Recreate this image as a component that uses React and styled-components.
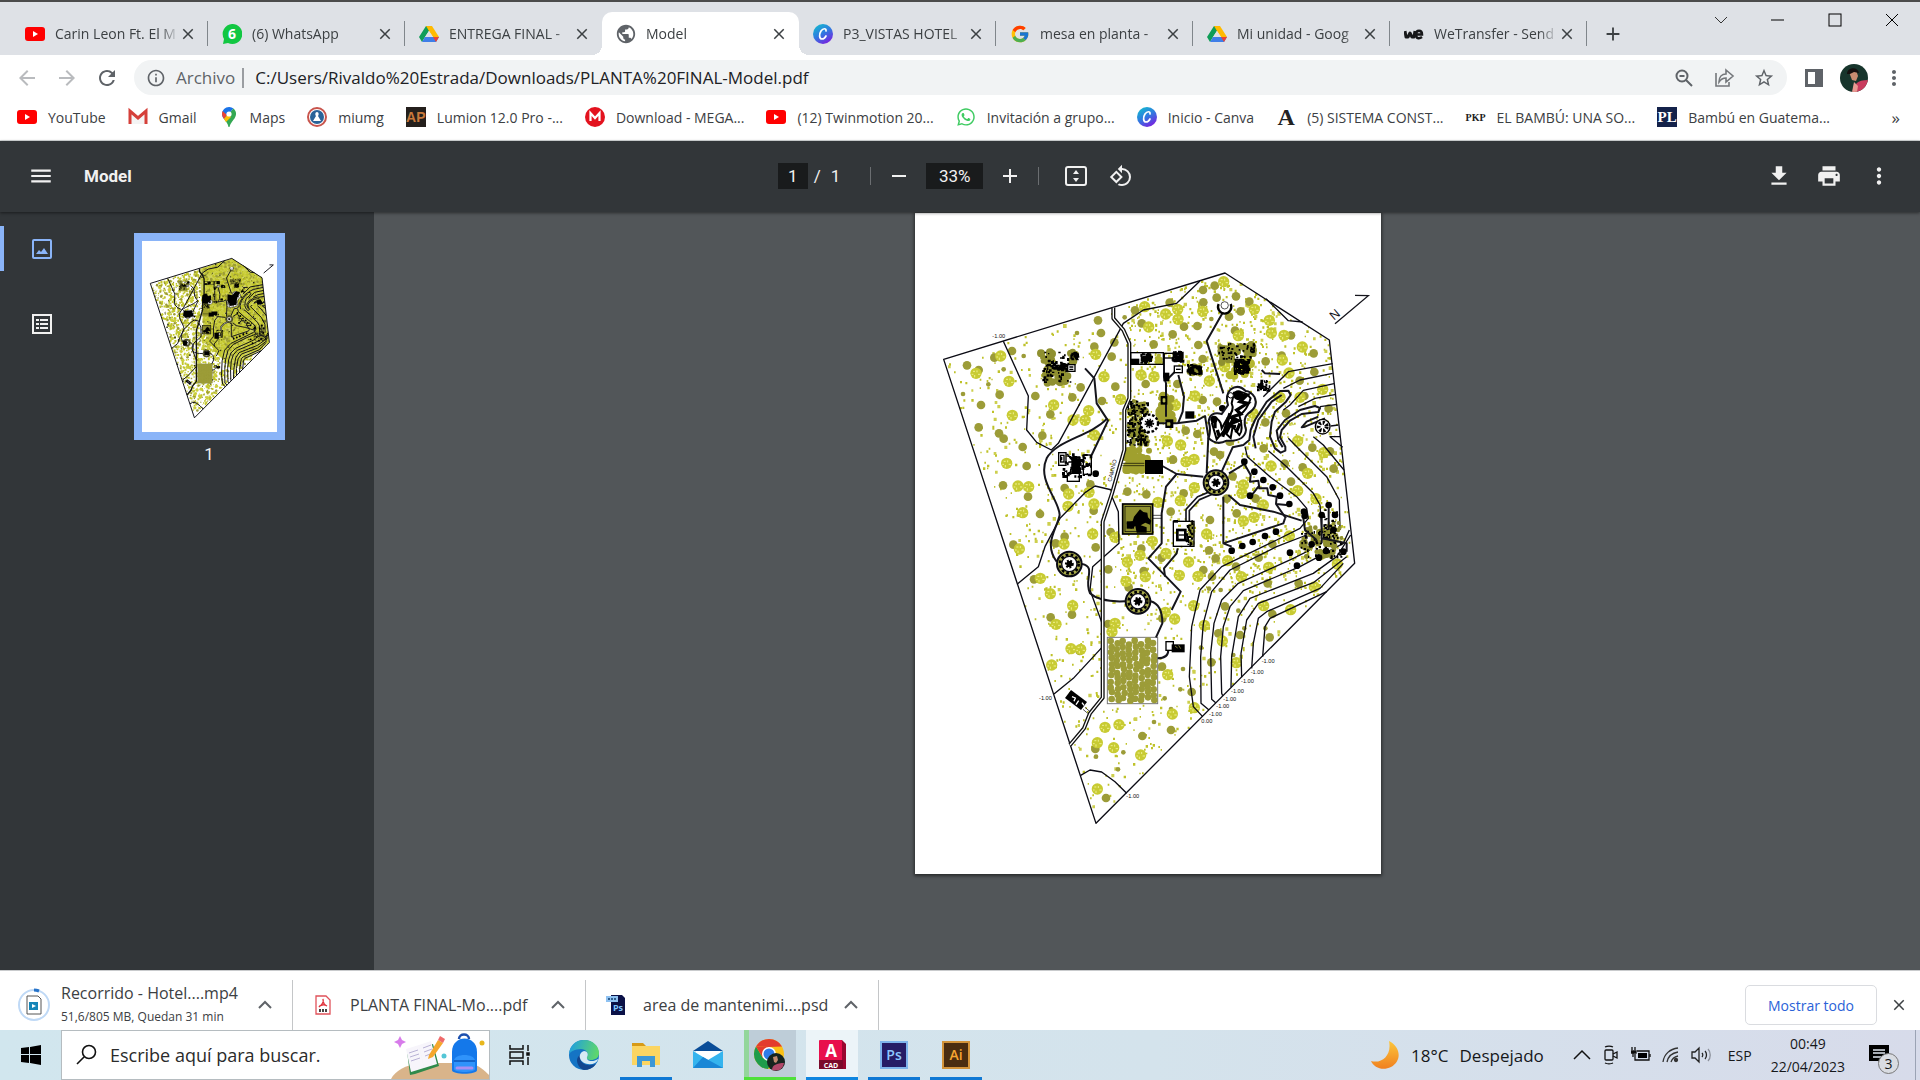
import React from "react";
import styled, { createGlobalStyle, css } from "styled-components";
import {
  MdArrowBack,
  MdArrowForward,
  MdRefresh,
  MdInfoOutline,
  MdStarBorder,
  MdPublic,
  MdMenu,
  MdMoreVert,
  MdFileDownload,
  MdPrint,
  MdRotate90DegreesCcw,
  MdAdd,
  MdRemove,
  MdClose,
} from "react-icons/md";
import { FcGoogle } from "react-icons/fc";
import { FaWhatsapp } from "react-icons/fa";

/* ---------- site plan data ---------- */

const outline = [
  [101, 448],
  [945, 189],
  [1258, 390],
  [1334, 1060],
  [558, 1840],
];

const brightTrees = [
  [941, 215], [704, 290], [767, 312], [803, 298], [804, 328], [716, 351], [878, 304], [1033, 298],
  [1078, 331], [1084, 369], [1122, 376], [1177, 411], [1117, 450], [272, 438], [198, 490], [297, 514],
  [557, 433], [431, 585], [536, 602], [525, 631], [307, 616], [582, 500], [553, 675], [290, 760],
  [324, 828], [356, 830], [338, 908], [474, 889], [476, 852], [537, 847], [552, 882], [548, 972],
  [489, 630], [632, 568], [693, 495], [732, 500], [898, 513], [855, 558], [796, 586], [772, 693],
  [812, 705], [828, 755], [852, 748], [853, 833], [811, 872], [744, 877], [985, 377], [944, 470],
  [1137, 489], [1110, 562], [1238, 538], [1170, 562], [1029, 610], [1163, 693], [1241, 728], [1193, 790],
  [1163, 842], [1218, 866], [1083, 768], [1000, 825], [1060, 885], [1000, 933], [1032, 922], [890, 972],
  [1138, 978], [996, 850], [615, 982], [328, 1017], [462, 1002], [391, 1105], [421, 1151], [488, 1187],
  [438, 1243], [483, 1316], [512, 1318], [425, 1365], [652, 1056], [690, 1036], [727, 994], [768, 1030],
  [836, 1056], [808, 1096], [864, 1099], [953, 1052], [994, 1100], [1076, 1072], [1282, 1062], [706, 1100],
  [648, 1114], [766, 1207], [794, 1227], [615, 1240], [606, 1265], [851, 1187], [883, 1246], [937, 1293],
  [979, 1358], [1061, 1187], [1142, 1199], [1213, 1131], [773, 1394], [787, 1512], [853, 1493], [585, 1552],
  [627, 1544], [562, 1598], [611, 1613], [692, 1635], [562, 1737],
];

const oliveTrees = [
  [914, 227], [879, 240], [880, 277], [779, 278], [675, 301], [920, 263], [978, 259], [1018, 275],
  [992, 304], [957, 320], [564, 331], [573, 369], [695, 340], [822, 350], [862, 348], [788, 373],
  [865, 405], [731, 403], [553, 410], [613, 397], [605, 440], [306, 423], [253, 443], [171, 466],
  [206, 480], [269, 554], [213, 585], [376, 558], [487, 562], [421, 613], [576, 573], [512, 532],
  [616, 530], [206, 652], [267, 670], [281, 686], [397, 677], [338, 711], [350, 768], [279, 826],
  [354, 860], [390, 912], [464, 834], [541, 823], [551, 902], [464, 980], [602, 966], [652, 845],
  [709, 853], [782, 905], [821, 850], [789, 749], [707, 522], [802, 522], [878, 447], [975, 362],
  [1143, 376], [1115, 437], [1067, 454], [1211, 430], [1213, 486], [1169, 512], [1256, 596], [1183, 558],
  [1128, 610], [1066, 637], [1061, 715], [1207, 713], [1260, 724], [1271, 776], [1178, 772], [1124, 761],
  [1143, 815], [968, 799], [980, 910], [900, 930], [1037, 866], [950, 866], [959, 695], [912, 725],
  [930, 735], [862, 672], [827, 662], [878, 570], [921, 575], [310, 1004], [437, 1000], [372, 1108],
  [422, 1222], [486, 1214], [509, 1323], [557, 1012], [694, 1016], [595, 1078], [701, 1083], [755, 1043],
  [656, 1132], [757, 1225], [594, 1242], [897, 1021], [917, 1045], [880, 1080], [906, 1100], [978, 1070],
  [1046, 1043], [1073, 1120], [1166, 1120], [1087, 1002], [945, 1189], [925, 1270], [990, 1275], [1079, 1282],
  [1087, 1212], [904, 1357], [845, 1446], [756, 1370], [783, 1560], [697, 1578], [588, 1764], [556, 1617],
];

const shrubs = [
  [501, 369], [341, 438], [281, 478], [159, 552], [235, 523], [904, 327], [558, 1640], [640, 1627],
  [624, 1678], [732, 1536], [811, 1438], [819, 1377], [764, 1465], [932, 1140], [897, 1136], [985, 1202],
  [1003, 1255], [970, 1335], [873, 1313], [1066, 1255], [644, 322], [783, 1497],
];

const contours = [
  "280,394 355,558 350,660 380,697 424,720 445,700 640,340 700,300 800,280 870,213",
  "1068,266 1135,332 1178,336",
  "606,840 555,828 525,848 450,925 418,985 405,1010 385,1070 323,1121",
  "606,860 625,905 627,1000 548,1070 540,1140 580,1250 578,1310 490,1405 432,1452",
  "512,1696 540,1680 575,1686 615,1715 650,1750",
  "1268,461 1135,485 1060,560",
  "1268,490 1170,510 1120,535",
  "1272,521 1180,541 1140,585 1120,600",
  "1278,553 1215,565 1165,590",
  "1280,583 1230,590",
  "1285,645 1262,648",
  "1298,712 1260,680 1290,680",
  "1210,680 1240,705 1302,780",
  "1135,685 1175,725 1250,800 1288,870 1290,960",
  "1075,722 1130,770 1210,850 1230,885 1235,960",
  "1005,710 1012,740 1080,800 1160,860 1190,895 1195,925 1170,955 1100,990 935,1070 870,1140 845,1250 838,1400 850,1490 878,1520",
  "1190,975 1100,1010 960,1080 905,1145 880,1240 872,1340 873,1480 897,1500",
  "1200,1020 1150,1045 985,1120 935,1170 912,1240 902,1330 905,1468 917,1478",
  "1318,960 1300,1000 1170,1070 1000,1142 960,1190 940,1250 932,1340 935,1450 938,1457",
  "1322,975 1280,1040 1210,1090 1020,1165 985,1220 965,1340 963,1432",
  "1310,1040 1210,1118 1045,1180 1010,1230 993,1330 995,1402",
  "1300,1060 1230,1135 1070,1205 1045,1225 1030,1300 1025,1375",
  "1250,1145 1080,1225 1065,1250 1058,1340",
];

const paths = [
  "M525 475 L553 505 L560 580 L594 632 L545 735",
  "M592 625 C540 680 440 690 410 745 C380 810 448 870 449 915 C440 960 400 1000 440 1055",
  "M516 1062 C560 1070 520 1110 540 1150 C560 1168 600 1176 645 1174",
  "M722 1174 C745 1180 757 1200 757 1240 L738 1282",
  "M743 1345 C765 1345 775 1335 775 1320",
  "M938 308 L890 393 L940 550",
  "M757 768 L800 792 L880 800",
  "M800 792 L768 830 L755 910 L755 1000 L715 1045 L812 1145 L785 1200",
  "M803 1015 L800 1030 L762 1075 L765 1100",
  "M745 640 L800 640 L860 632 L885 618 L895 680 L890 790",
  "M805 495 L822 560 L818 605 L805 638",
  "M762 430 V500 L768 520 V620 M770 510 L800 480",
  "M955 855 L990 885 L1090 905 L1175 932",
  "M940 860 V1000 L965 1010 M940 1000 L1120 940 L1125 925",
  "M957 790 L1003 762 L1022 795 L1020 815 L1045 812 L1048 835 L1072 835 L1075 855 L1100 860 L1098 882 L1130 885 M1045 830 L1022 860 M1098 882 L1128 925",
  "M1055 480 L1065 490 L1110 492",
  "M1180 925 L1185 960 L1220 990 M1235 915 V1000 M1256 885 V960 M1235 985 L1310 1000 V1025",
  "M935 785 L968 712 L1000 705 L1018 690 L1022 660 L1035 630 L1070 575 L1110 543 L1135 542 L1142 555 L1128 575 L1095 605 L1085 635 L1080 680 L1095 715 L1112 728 L1126 722 L1126 710 L1110 682 L1115 660 L1140 632 L1175 612 L1225 606 L1230 594 L1215 588 L1170 600 L1125 630 L1100 662 L1105 690 L1118 712",
  "M1037 715 L1030 680 L1045 630 L1085 575 L1115 555",
  "M1245 625 L1185 650 L1175 652 L1190 635 L1225 620",
];

const villas = [
  [1003, 755], [1033, 785], [1060, 810], [1088, 832], [1110, 857], [1138, 882], [1020, 857],
  [965, 1022], [997, 1008], [1028, 996], [1065, 978], [1098, 965], [1182, 905], [1184, 918], [1235, 915],
  [1256, 885], [1275, 915], [1300, 1025], [1248, 1023], [1227, 1043], [1140, 1028], [1161, 1067],
  [1205, 1003], [937, 595], [557, 791], [1270, 960],
];

/* x, y, w, h, amount, biggest mark, colour */
const OLIVE = "#8f9030";
const clusters = [
  [380, 412, 60, 60, 10, 13, OLIVE],
  [395, 460, 90, 72, 26, 14, OLIVE],
  [470, 412, 40, 60, 8, 13, OLIVE],
  [395, 420, 90, 100, 46, 9, "#000"],
  [420, 458, 60, 26, 40, 12, "#000"],
  [480, 425, 28, 28, 30, 9, "#000"],
  [446, 730, 102, 75, 50, 10, "#000"],
  [476, 735, 40, 60, 40, 14, "#000"],
  [690, 428, 40, 34, 60, 10, "#000"],
  [732, 430, 28, 34, 9, 9, "#b0b22f"],
  [785, 422, 38, 36, 50, 12, "#000"],
  [826, 460, 56, 40, 12, 11, OLIVE],
  [828, 462, 50, 36, 44, 11, "#000"],
  [650, 566, 72, 145, 90, 10, OLIVE],
  [650, 570, 68, 138, 130, 9, "#000"],
  [636, 705, 90, 90, 60, 12, "#a0a02e"],
  [735, 545, 65, 110, 26, 14, "#a0a02e"],
  [918, 390, 124, 80, 36, 13, OLIVE],
  [940, 440, 100, 70, 12, 14, "#b4b62f"],
  [925, 395, 112, 60, 50, 8, "#000"],
  [970, 445, 52, 50, 110, 10, "#000"],
  [1040, 508, 42, 38, 32, 9, "#000"],
  [1165, 945, 120, 105, 50, 10, OLIVE],
  [1240, 930, 60, 70, 16, 9, OLIVE],
  [1170, 960, 130, 90, 60, 8, "#000"],
  [1235, 895, 50, 90, 26, 8, "#000"],
  [832, 930, 22, 80, 12, 8, OLIVE],
  [825, 930, 26, 80, 26, 9, "#000"],
];

const levelMarks = [
  [247, 383, "-1.00"],
  [387, 1470, "-1.00"],
  [1055, 1359, "-1.00"],
  [1022, 1392, "-1.00"],
  [993, 1419, "-1.00"],
  [963, 1449, "-1.00"],
  [940, 1473, "-1.00"],
  [919, 1494, "-1.00"],
  [897, 1518, "-1.00"],
  [874, 1539, "0.00"],
  [649, 1764, "-1.00"],
];

function makeRandom(seed) {
  let s = seed;
  return () => {
    s = (s * 16807) % 2147483647;
    return s / 2147483647;
  };
}

function inside(x, y) {
  let hit = false;
  for (let i = 0, j = outline.length - 1; i < outline.length; j = i++) {
    const [xi, yi] = outline[i];
    const [xj, yj] = outline[j];
    if (yi > y !== yj > y && x < ((xj - xi) * (y - yi)) / (yj - yi) + xi) hit = !hit;
  }
  return hit;
}

function scatter(count, min, max, seed) {
  const rnd = makeRandom(seed);
  let d = "";
  for (let i = 0; i < count; i++) {
    const x = 110 + rnd() * 1220;
    const y = 200 + rnd() * 1630;
    const keep = rnd();
    const s = Math.round(min + rnd() * (max - min));
    const sparse = x < 640 || y > 1150;
    if (!inside(x, y) || !inside(x + s, y + s) || (sparse && keep > 0.4)) continue;
    d += `M${Math.round(x)} ${Math.round(y)}h${s}v${s + 1}h-${s}z`;
  }
  return d;
}

function clutter([x, y, w, h, amount, big, colour], seed) {
  const rnd = makeRandom(seed * 977 + 13);
  let d = "";
  for (let i = 0; i < amount; i++) {
    if (colour !== "#000") {
      const r = Math.round(big - 4 + rnd() * 4);
      const cx = Math.round(x + rnd() * (w - 2 * r));
      const cy = Math.round(y + r + rnd() * (h - 2 * r));
      d += `M${cx} ${cy}a${r} ${r} 0 1 0 ${2 * r} 0a${r} ${r} 0 1 0 ${-2 * r} 0z`;
      continue;
    }
    const a = Math.round(4 + rnd() * (big - 4));
    const b = Math.round(4 + rnd() * (big - 4));
    const px = Math.round(x + rnd() * (w - a));
    const py = Math.round(y + rnd() * (h - b));
    d += `M${px} ${py}h${a}v${b}h-${a}z`;
  }
  return d;
}

const orchard = [];
const orchardRandom = makeRandom(321);
for (let r = 0; r < 11; r++) {
  for (let c = 0; c < 8; c++) {
    orchard.push([
      Math.round(602 + c * 18 + orchardRandom() * 6),
      Math.round(1292 + r * 17 + (c % 2) * 7 + orchardRandom() * 5),
    ]);
  }
}

const dots = scatter(4200, 4, 7, 41);
const bigDots = scatter(700, 6, 11, 5);
const thumbDots = scatter(6000, 12, 22, 77);
const thumbShade = scatter(900, 10, 20, 19);
const thumbMarks = scatter(260, 8, 16, 63);

function Wheel({ x, y, r }) {
  return (
    <g>
      <circle cx={x} cy={y} r={r} fill="#a8aa4a" stroke="#0b0b14" strokeWidth="6" />
      <circle cx={x} cy={y} r={r - 9} fill="none" stroke="#000" strokeWidth="8" strokeDasharray="8 7" />
      <circle cx={x} cy={y} r={r - 14} fill="#fff" stroke="#0b0b14" strokeWidth="4" />
      <circle cx={x} cy={y} r={r / 4} />
      <circle cx={x} cy={y} r={r / 4} fill="none" stroke="#000" strokeWidth="8" strokeDasharray="5 4" />
    </g>
  );
}

function SitePlan({ small }) {
  const thin = small ? 10 : 4;
  const road = "M610 293 V325 L640 360 L658 400 V565 L643 600 V720 L606 850 L578 935 V1463 L540 1510 L522 1555 L480 1605";
  return (
    <PlanDrawing viewBox="15 9 1398 1983" role="img" aria-label="Planta de conjunto">
      {small && (
        <>
          <path d="M610 300 L945 189 L1258 390 L1334 1060 L960 1340 L760 1150 L650 900 Z" fill="#c2c62b" opacity="0.75" />
          <path d={thumbDots} fill="#c2c62b" />
          <path d={thumbShade} fill="#9c9e36" />
          <path d={thumbMarks} fill="#2a2c14" />
        </>
      )}
      <path d={dots} fill="#bfc22a" />
      {!small && <path d={bigDots} fill="#cdcf4e" />}
      {oliveTrees.map(([x, y]) => (
        <circle key={`${x}-${y}`} cx={x} cy={y} r="13" fill="#9c9c38" />
      ))}
      {shrubs.map(([x, y]) => (
        <circle key={`${x}-${y}`} cx={x} cy={y} r="7" fill="#9c9c38" />
      ))}
      {brightTrees.map(([x, y]) => (
        <g key={`${x}-${y}`}>
          <circle cx={x} cy={y} r="17" fill="#c8cb33" />
          <path
            d={`M${x - 9} ${y - 6}h6M${x + 3} ${y - 9}v6M${x - 4} ${y + 5}v7M${x + 6} ${y + 3}h7M${x - 13} ${y + 3}h5`}
            stroke="#eef08e"
            strokeWidth="3"
          />
        </g>
      ))}
      <g fill="none" stroke="#0b0b14" strokeWidth={thin} strokeLinejoin="round">
        {contours.map((points) => (
          <polyline key={points} points={points} />
        ))}
        <polygon points={outline.join(" ")} />
      </g>

      {clusters.map((c, i) => (
        <path key={i} d={clutter(c, i + 3)} fill={c[6]} />
      ))}

      <rect x="592" y="1282" width="151" height="199" fill={small ? "#9c9c38" : "#fff"} stroke="#777" strokeWidth="3" />
      {orchard.map(([x, y]) => (
        <circle key={`${x}-${y}`} cx={x} cy={y} r="10" fill="#9c9c38" />
      ))}

      <g fill="none" stroke="#15151c" strokeWidth={small ? 10 : 6} strokeLinejoin="round">
        {paths.map((d) => (
          <path key={d} d={d} />
        ))}
      </g>
      <g fill="none" strokeLinejoin="round">
        <path d="M905 848 L865 865 L833 900 V935" stroke="#15151c" strokeWidth="15" />
        <path d="M905 848 L865 865 L833 900 V935" stroke="#fff" strokeWidth="5" />
        <path d={road} stroke="#111" strokeWidth={small ? 14 : 12} />
        {!small && <path d={road} stroke="#fff" strokeWidth="4" />}
      </g>

      <g fill="none" stroke="#000" strokeWidth="4">
        <rect x="662" y="428" width="98" height="35" />
        <rect x="762" y="430" width="30" height="14" />
        <rect x="473" y="464" width="22" height="20" fill="#fff" />
        <path d="M478 471h12M478 478h12" />
        <rect x="793" y="468" width="24" height="20" fill="#fff" />
        <path d="M798 478h14" />
        <rect x="638" y="882" width="90" height="90" fill="#8f9030" strokeWidth="5" />
        <rect x="645" y="889" width="76" height="76" strokeWidth="2" />
        <rect x="790" y="934" width="62" height="75" />
        <rect x="802" y="960" width="24" height="30" fill="#fff" strokeWidth="8" />
        <path d="M806 975h16" />
        <rect x="768" y="1295" width="22" height="26" />
        <path d="M637 760h66M637 767h66M727 916h28M727 925h28" strokeWidth="2" />
        <rect x="446" y="728" width="22" height="38" />
        <rect x="452" y="736" width="10" height="20" />
        <rect x="520" y="735" width="24" height="58" />
        <rect x="472" y="790" width="36" height="24" />
      </g>
      <g fill="#000">
        <rect x="662" y="446" width="26" height="17" />
        <rect x="705" y="750" width="54" height="42" />
        <rect x="826" y="604" width="27" height="22" />
        <rect x="766" y="628" width="24" height="26" />
        <rect x="752" y="558" width="20" height="26" />
        <rect x="760" y="488" width="18" height="26" />
        <rect x="785" y="1303" width="39" height="24" />
        <rect x="484" y="745" width="24" height="44" />
        <path d="M650 938l18-4 4-14 18-22 10 8 12 2 2 14 10 10-4 12-14-6-14 8 18 6v16h-30l-4-20-12 8-12-6z" />
        <rect x="650" y="934" width="22" height="22" />
        <rect x="468" y="1455" width="60" height="30" transform="rotate(37 498 1470)" />
        <rect x="790" y="930" width="14" height="8" />
      </g>
      <path d="M486 1460l10 4-4 10M506 1472l-8 12M516 1478l6 8" stroke="#fff" strokeWidth="4" fill="none" />
      <path d="M525 1492l14 12M519 1498l14 12" stroke="#000" strokeWidth="2" />
      <path d="M759 566h6v10h-6zM772 638h8v8h-8zM795 1308l8 6M806 1306l6 10" fill="#b9bb55" stroke="#b9bb55" strokeWidth="2" />
      {villas.map(([x, y]) => (
        <circle key={`${x}-${y}`} cx={x} cy={y} r="10" />
      ))}

      {/* pool */}
      <path
        d="M962 538 Q944 556 954 585 L935 612 Q900 603 896 635 Q904 660 896 685 Q920 708 950 692 Q1004 695 1008 660 Q997 625 1015 610 Q1046 590 1034 562 Q1022 543 1007 543 Q985 521 962 538Z"
        fill="#fff"
        stroke="#15151c"
        strokeWidth="6"
      />
      <path
        d="M972 548 Q1005 540 1022 565 Q1012 600 988 616 Q1002 660 988 675 L968 650 L962 684 L940 664 L920 688 L906 640 Q915 610 932 640 L935 655 L952 625 Q975 600 965 580Z"
        fill="none"
        stroke="#000"
        strokeWidth="6"
      />
      <path
        d="M975 560L1010 556L990 575L1012 580L980 600L992 612L962 622L985 632L948 646L978 650M960 610L938 680M968 630L948 670M990 640L978 668M915 625v30M922 660l6 20"
        fill="none"
        stroke="#000"
        strokeWidth="10"
      />
      <circle cx="985" cy="556" r="15" />
      <circle cx="912" cy="628" r="11" />
      <circle cx="962" cy="556" r="8" fill="#fff" stroke="#000" strokeWidth="3" />

      <path d="M926 282 A20 20 0 1 0 962 282" fill="#fff" stroke="#000" strokeWidth="7" />
      <circle cx="944" cy="286" r="11" fill="#fff" stroke="#000" strokeWidth="2" />
      <Wheel x={918} y={818} r={37} />
      <Wheel x={478} y={1062} r={37} />
      <Wheel x={684} y={1174} r={37} />
      <circle cx="718" cy="640" r="26" fill="#fff" stroke="#000" strokeWidth="7" strokeDasharray="8 5" />
      <circle cx="718" cy="640" r="10" />
      <circle cx="718" cy="640" r="12" fill="none" stroke="#000" strokeWidth="5" strokeDasharray="4 4" />
      <circle cx="1238" cy="650" r="22" fill="#fff" stroke="#000" strokeWidth="4" />
      <circle cx="1238" cy="650" r="12" fill="none" stroke="#000" strokeWidth="12" strokeDasharray="6 5" />

      {small && (
        <g fill="#000">
          <path d="M640 570l40-20 20 30 30-10v50l-40 40-50-10zM450 735l80-10 20 60-70 20-40-20zM900 560l50 10 40-40 40 10-30 60-10 70-60 10-30-60z" />
          <path d="M765 960h45v60h-45zM440 1040h40v50h-40zM660 1150h50v40h-50zM1200 630l40-20 30 50-60 10zM735 740h60v35h-60z" />
        </g>
      )}

      <path d="M1335 256 L1375 257 L1275 341" fill="none" stroke="#15151c" strokeWidth={small ? 10 : 4} />
      {!small && (
        <>
          <PlanLetter x="1272" y="332" transform="rotate(-40 1272 332)">N</PlanLetter>
          <PlanLabel x="604" y="816" transform="rotate(-76 604 816)">CAMINO</PlanLabel>
          {levelMarks.map(([x, y, text]) => (
            <PlanLabel key={`${x}-${y}`} x={x} y={y}>
              {text}
            </PlanLabel>
          ))}
        </>
      )}
    </PlanDrawing>
  );
}

/* ---------- icons ---------- */

const YouTubeIcon = () => (
  <svg width="20" height="20" viewBox="0 0 20 20">
    <rect y="3" width="20" height="14" rx="3" fill="#f00" />
    <path d="M8 7v6l5-3z" fill="#fff" />
  </svg>
);
const DriveIcon = () => (
  <svg width="20" height="20" viewBox="0 0 20 20">
    <path d="M7 2h6L6 13l-3 5-3-5z" fill="#0f9d58" />
    <path d="M7 2h6l7 11h-6l-4-6z" fill="#ffba00" />
    <path d="M3 18l3-5h14l-3 5z" fill="#3f7ee8" />
    <path d="M14 13h6l-3 5z" fill="#ea4335" />
    <path d="M10 7l4 6H6z" fill="#dee1e6" />
  </svg>
);
const CanvaIcon = () => (
  <svg width="20" height="20" viewBox="0 0 20 20">
    <defs>
      <linearGradient id="canva" x1="0" y1="0" x2="0.6" y2="1">
        <stop offset="0" stopColor="#10c5cc" />
        <stop offset="0.55" stopColor="#2f7be0" />
        <stop offset="1" stopColor="#7228e0" />
      </linearGradient>
    </defs>
    <circle cx="10" cy="10" r="10" fill="url(#canva)" />
    <path d="M13 7c.5-3-3-3-5 0s-2 8 1 8c2 0 3-1 4-3" fill="none" stroke="#fff" strokeWidth="1.7" strokeLinecap="round" />
  </svg>
);
const WhatsAppBadge = () => (
  <svg width="20" height="20" viewBox="0 0 20 20">
    <path d="M10 0a10 10 0 1 1-4 19l-5 1 1-5a10 10 0 0 1 8-15z" fill="#12c742" />
    <text x="10" y="15" textAnchor="middle" fontFamily="Open Sans, sans-serif" fontSize="14" fontWeight="700" fill="#fff">
      6
    </text>
  </svg>
);
const WeIcon = () => (
  <svg width="20" height="20" viewBox="0 0 20 20">
    <path d="M1 7l1 6h2l2-4 2 4h2l1-6" fill="none" stroke="#17181a" strokeWidth="3" strokeLinejoin="round" />
    <path d="M12 10.500h6c0-5-6-5-6 0s4 4 6 2.500" fill="none" stroke="#17181a" strokeWidth="2.500" />
  </svg>
);
const GmailIcon = () => (
  <svg width="20" height="20" viewBox="0 0 20 20">
    <path d="M2 17V4l8 7 8-7v13" fill="#f4f4f4" stroke="#d5403a" strokeWidth="3" />
  </svg>
);
const MapsIcon = () => (
  <svg width="20" height="20" viewBox="0 0 20 20">
    <path d="M10 0a7 7 0 0 0-7 7c0 2 .7 3.500 2 5L14.500 1.500A7 7 0 0 0 10 0z" fill="#1a73e8" />
    <path d="M3.500 4 8 8l-3 4C3 9 2.500 7 3.500 4z" fill="#ea4335" />
    <path d="M5 12l9.500-10.500c3.500 3 3 7 1 10-3 4-4 5-5 8.500H9.500C9 17 7 14.500 5 12z" fill="#34a853" />
    <path d="M5 12l4-5 3 3-5 5z" fill="#fbbc04" />
    <circle cx="10" cy="7" r="2.600" fill="#fff" />
  </svg>
);
const MiumgIcon = () => (
  <svg width="20" height="20" viewBox="0 0 20 20">
    <circle cx="10" cy="10" r="9" fill="#fff" stroke="#c8544c" strokeWidth="2" />
    <circle cx="10" cy="10" r="7" fill="#2a6399" />
    <path d="M10 5c2 0 2 3 1 4l3 5H6l3-5c-1-1-1-4 1-4z" fill="#fff" />
  </svg>
);
const MegaIcon = () => (
  <svg width="20" height="20" viewBox="0 0 20 20">
    <circle cx="10" cy="10" r="10" fill="#e3121e" />
    <path d="M5.500 14V6l4.500 5 4.500-5v8" fill="none" stroke="#fff" strokeWidth="2.200" />
  </svg>
);
const MagnifierMinusIcon = () => (
  <svg width="20" height="20" viewBox="0 0 20 20" fill="none" stroke="#5f6368" strokeWidth="2">
    <circle cx="8" cy="8" r="5.500" />
    <path d="M12 12l6 6M5.500 8h5" />
  </svg>
);
const ShareIcon = () => (
  <svg width="22" height="20" viewBox="0 0 22 20" fill="none" stroke="#74777b" strokeWidth="1.600">
    <path d="M3 5v13h13v-4" />
    <path d="M13 2l7 6-7 6v-4c-3 0-5 1-7 4 0-5 3-8 7-8z" />
  </svg>
);
const SidePanelIcon = () => (
  <svg width="20" height="20" viewBox="0 0 20 20">
    <path d="M1 1h18v18H1zM4 4v12h7V4z" fill="#5f6368" fillRule="evenodd" />
  </svg>
);
const AvatarIcon = ({ size }) => (
  <svg width={size} height={size} viewBox="0 0 28 28">
    <defs>
      <clipPath id={`face${size}`}>
        <circle cx="14" cy="14" r="14" />
      </clipPath>
    </defs>
    <g clipPath={`url(#face${size})`}>
      <rect width="28" height="28" fill="#17352c" />
      <path d="M14 28c0-8 3-12 14-12v12z" fill="#c93c5e" />
      <path d="M9 8l7-2 2 6-2 5-4-1z" fill="#c88c70" />
      <path d="M7 10c0-7 11-8 12-1l-5-1-4 2z" fill="#15100f" />
      <path d="M12 28l2-10 4 4-1 6z" fill="#e89a92" />
    </g>
  </svg>
);
const FitIcon = () => (
  <svg width="24" height="24" viewBox="0 0 24 24">
    <rect x="2" y="3" width="20" height="18" rx="2" fill="none" stroke="#f1f1f1" strokeWidth="2" />
    <path d="M12 6l3 4H9zM12 18l3-4H9z" fill="#f1f1f1" />
  </svg>
);
const ThumbsIcon = () => (
  <svg width="20" height="20" viewBox="0 0 20 20">
    <rect x="1" y="1" width="18" height="18" rx="1" fill="none" stroke="#8ab4f8" strokeWidth="2" />
    <path d="M4 15l3-4 2 2 3-4 4 6z" fill="#8ab4f8" />
  </svg>
);
const OutlineIcon = () => (
  <svg width="20" height="20" viewBox="0 0 20 20" fill="none" stroke="#f1f1f1" strokeWidth="2">
    <rect x="1" y="1" width="18" height="18" />
    <path d="M4 6h3M8 6h8M4 10h3M8 10h8M4 14h3M8 14h8" />
  </svg>
);
const ChevronUp = ({ color }) => (
  <svg width="14" height="10" viewBox="0 0 14 10">
    <path d="M1 8l6-6 6 6" fill="none" stroke={color} strokeWidth="2" />
  </svg>
);
const VideoFileIcon = () => (
  <svg width="34" height="34" viewBox="0 0 34 34">
    <circle cx="17" cy="17" r="15" fill="none" stroke="#bfd9f6" strokeWidth="2" />
    <path d="M17 2a15 15 0 0 1 5 1" stroke="#2673c9" strokeWidth="3" fill="none" />
    <path d="M10 8h11l3 3v15H10z" fill="#fff" stroke="#555" />
    <rect x="12" y="14" width="9" height="8" fill="#1585b8" />
    <path d="M15 16v4l4-2z" fill="#fff" />
  </svg>
);
const PdfFileIcon = () => (
  <svg width="20" height="20" viewBox="0 0 20 20">
    <path d="M5 1h8l4 4v14H3V1z" fill="#fff" stroke="#e0525a" strokeWidth="1.300" />
    <path d="M10 4c1 3 0 5-4 8 1-2 5-3 8-1-3-1-4-4-4-7z" fill="none" stroke="#e0323c" strokeWidth="1.300" />
    <path d="M6 15.500h8" stroke="#444" strokeWidth="3" strokeDasharray="2 1" />
  </svg>
);
const PsdFileIcon = () => (
  <svg width="20" height="20" viewBox="0 0 20 20">
    <path d="M5 0h11l3 3v17H5z" fill="#0b1147" />
    <rect y="1" width="12" height="6" fill="#8fc2f2" />
    <path d="M2 4h8" stroke="#2d5d8c" strokeWidth="2" strokeDasharray="2 1" />
    <text x="12" y="16" textAnchor="middle" fontFamily="Open Sans, sans-serif" fontSize="9" fontWeight="700" fill="#7cc4ff">
      Ps
    </text>
  </svg>
);
const WindowsIcon = () => (
  <svg width="20" height="20" viewBox="0 0 20 20">
    <path d="M0 3l8-1v7H0zM9 2l11-2v9H9zM0 10h8v8l-8-1zM9 10h11v10L9 18z" />
  </svg>
);
const SearchArt = () => (
  <svg width="98" height="48" viewBox="0 0 98 48">
    <path d="M0 48c4-8 14-14 30-16h48c10 2 16 8 20 12v4z" fill="#d9b48a" />
    <path d="M9 5l2 4 4 2-4 2-2 4-2-4-4-2 4-2z" fill="#d77bea" />
    <path d="M16 20l14-4 12-3 6 22-24 8-5 1z" fill="#2f8a4b" />
    <path d="M15 18l13-4 5 23-13 4zM28 14l12-4 6 23-13 4z" fill="#f7f5fb" />
    <path d="M18 22l9-3M19 26l9-3M20 30l9-3M32 17l8-3M33 21l8-3M34 25l8-3" stroke="#b9b2d6" />
    <path d="M38 24l9-15 5 3-10 14-5 2z" fill="#f5a72c" />
    <path d="M47 9l2-4 5 3-2 4z" fill="#ef6a6a" />
    <circle cx="53" cy="25" r="2.500" fill="#54c6d6" />
    <circle cx="91" cy="12" r="2.500" fill="#e8b71d" />
    <path d="M68 8c0-6 10-6 10 0" fill="none" stroke="#1c4fae" strokeWidth="2.500" />
    <path d="M61 21c0-18 25-18 25 0v18c0 5-25 5-25 0z" fill="#1478ea" />
    <path d="M63 30c0-8 21-8 21 0v8c0 4-21 4-21 0z" fill="#2f93fb" />
    <path d="M63 30h21" stroke="#0d55b8" strokeWidth="1.500" />
    <path d="M66 37h15" stroke="#a98ff2" strokeWidth="3" strokeLinecap="round" />
  </svg>
);
const TaskViewIcon = () => (
  <svg width="22" height="22" viewBox="0 0 22 22" fill="none" stroke="#111" strokeWidth="1.500">
    <path d="M1 1v4h13V1M1 21v-4h13v4M1 8h13v6H1zM19 1v6M19 13v8" />
    <rect x="18" y="9" width="2" height="2" fill="#111" />
  </svg>
);
const EdgeIcon = () => (
  <svg width="30" height="30" viewBox="0 0 30 30">
    <defs>
      <linearGradient id="edgeTop" x1="0" y1="0.300" x2="1" y2="0.500">
        <stop offset="0" stopColor="#1f9ee0" />
        <stop offset="1" stopColor="#5fd86a" />
      </linearGradient>
    </defs>
    <circle cx="15" cy="15" r="15" fill="#1574c4" />
    <path d="M0 14C1 4 8 0 15 0c9 0 15 6 15 13 0 5-4 7-8 7-3 0-5-1-4-3 2-4-1-8-6-8C6 9 1 12 0 14z" fill="url(#edgeTop)" />
    <path d="M11 15c-1 7 5 11 11 10 2 0 4-1 5-1-3 4-7 6-12 6C9 28 5 19 11 15z" fill="#12468f" />
    <path d="M18 17c2-3 0-6-3-6-3 1-5 4-4 7 1 5 9 8 15 5 2-1 3-3 3-4-4 3-12 3-11-2z" fill="#d6eaf4" />
  </svg>
);
const ExplorerIcon = () => (
  <svg width="28" height="26" viewBox="0 0 28 26">
    <path d="M0 1h11l3 3H0z" fill="#d79a17" />
    <path d="M0 4h28v19H0z" fill="#fbd562" />
    <path d="M5 14h18v11h-5v-6h-8v6H5z" fill="#3c97d6" />
  </svg>
);
const MailIcon = () => (
  <svg width="30" height="30" viewBox="0 0 30 30">
    <path d="M0 11L15 1l15 10z" fill="#0a4d98" />
    <path d="M3 11h24v10H3z" fill="#fff" />
    <path d="M0 11l15 9 15-9v17H0z" fill="#35b4ee" />
    <path d="M30 28L10 17 0 28z" fill="#1a87d6" />
  </svg>
);
const ChromeIcon = () => (
  <svg width="34" height="34" viewBox="0 0 34 34">
    <circle cx="16" cy="16" r="15" fill="#fbc116" />
    <path d="M3 8.500A15 15 0 0 1 29 8.500L16 9z" fill="#e33b2e" />
    <path d="M3 8.500A15 15 0 0 0 15 31l6-11H10z" fill="#1f9c4b" />
    <path d="M3 8.500L10 20l6-11z" fill="#e33b2e" />
    <circle cx="16" cy="16" r="7" fill="#fff" />
    <circle cx="16" cy="16" r="5.500" fill="#2f7ce8" />
    <circle cx="23" cy="24" r="9" fill="#17241f" />
    <path d="M19 32c0-5 5-7 12-7-1 5-4 9-12 7z" fill="#b0486a" />
    <path d="M20 19l4-1 1 4-2 3-2-1z" fill="#c28a70" />
  </svg>
);
const AppBadge = ({ back, edge, ink, label }) => (
  <svg width="28" height="28" viewBox="0 0 28 28">
    <rect x="1" y="1" width="26" height="26" fill={back} stroke={edge} strokeWidth="2" />
    <text x="14" y="19" textAnchor="middle" fontFamily="Open Sans, sans-serif" fontSize="14" fontWeight="600" fill={ink}>
      {label}
    </text>
  </svg>
);
const AutoCadIcon = () => (
  <svg width="30" height="30" viewBox="0 0 30 30">
    <path d="M5 0h20l4 4v25H7z" fill="#99062f" />
    <rect x="2" width="23" height="21" rx="1" fill="#e80f4c" />
    <rect x="2" y="20" width="24" height="9" fill="#7b0a2b" />
    <text x="14" y="17" textAnchor="middle" fontFamily="Open Sans, sans-serif" fontSize="17" fontWeight="700" fill="#fff">
      A
    </text>
    <text x="14" y="28" textAnchor="middle" fontFamily="Open Sans, sans-serif" fontSize="7" fontWeight="700" fill="#fff">
      CAD
    </text>
  </svg>
);
const MoonIcon = () => (
  <svg width="30" height="30" viewBox="0 0 30 30">
    <defs>
      <linearGradient id="moon" x1="0" y1="0" x2="0" y2="1">
        <stop offset="0" stopColor="#fcc63c" />
        <stop offset="1" stopColor="#f0801f" />
      </linearGradient>
    </defs>
    <path d="M19 1c12 6 13 20 2 26C13 31 4 28 1 21c11 3 21-6 18-20z" fill="url(#moon)" />
  </svg>
);
const MeetIcon = () => (
  <svg width="18" height="20" viewBox="0 0 18 20" fill="none" stroke="#111" strokeWidth="1.300">
    <rect x="3" y="5" width="8" height="10" rx="1" />
    <path d="M11 9l4-2v6l-4-2M3 2c2-1 6-1 8 0M3 18c2 1 6 1 8 0" />
  </svg>
);
const BatteryIcon = () => (
  <svg width="20" height="16" viewBox="0 0 20 16">
    <path d="M6 4h12v9H4V7" fill="none" stroke="#111" strokeWidth="1.300" />
    <rect x="7" y="6" width="9" height="5" />
    <path d="M19 7v3M1 0v3M4 0v3M0 4h5v2H0zM2 6v4" stroke="#111" strokeWidth="1.300" />
  </svg>
);
const WifiIcon = () => (
  <svg width="18" height="18" viewBox="0 0 18 18" fill="none" stroke="#333" strokeWidth="1.300">
    <path d="M1 16C2 8 8 3 16 2M5 16c1-5 5-9 11-10M9 16c1-3 3-5 7-6" />
    <circle cx="14" cy="14" r="1.500" fill="#333" />
  </svg>
);
const SpeakerIcon = () => (
  <svg width="22" height="18" viewBox="0 0 22 18" fill="none" stroke="#222" strokeWidth="1.300">
    <path d="M1 6h3l4-4v14l-4-4H1zM11 7c1 1 1 3 0 4M14 5c2 2 2 6 0 8" />
    <path d="M17 3c3 3 3 9 0 12" stroke="#8b8f9a" />
  </svg>
);

/* ---------- content ---------- */

const tabs = [
  { title: "Carin Leon Ft. El M", icon: <YouTubeIcon /> },
  { title: "(6) WhatsApp", icon: <WhatsAppBadge /> },
  { title: "ENTREGA FINAL -", icon: <DriveIcon />, beforeActive: true },
  { title: "Model", icon: <MdPublic size={22} color="#5f6368" />, active: true },
  { title: "P3_VISTAS HOTEL", icon: <CanvaIcon /> },
  { title: "mesa en planta -", icon: <FcGoogle size={20} /> },
  { title: "Mi unidad - Goog", icon: <DriveIcon /> },
  { title: "WeTransfer - Send", icon: <WeIcon /> },
];

const bookmarks = [
  { title: "YouTube", icon: <YouTubeIcon /> },
  { title: "Gmail", icon: <GmailIcon /> },
  { title: "Maps", icon: <MapsIcon /> },
  { title: "miumg", icon: <MiumgIcon /> },
  { title: "Lumion 12.0 Pro -...", mark: "AP" },
  { title: "Download - MEGA...", icon: <MegaIcon /> },
  { title: "(12) Twinmotion 20...", icon: <YouTubeIcon /> },
  { title: "Invitación a grupo...", icon: <FaWhatsapp size={20} color="#3fcb62" /> },
  { title: "Inicio - Canva", icon: <CanvaIcon /> },
  { title: "(5) SISTEMA CONST...", mark: "A" },
  { title: "EL BAMBÚ: UNA SO...", mark: "PKP" },
  { title: "Bambú en Guatema...", mark: "PL" },
];

export default function App() {
  return (
    <Desktop>
      <GlobalStyle />
      <TabStrip>
        <TabList>
          {tabs.map((tab) => (
            <Tab key={tab.title} $active={tab.active} $plain={tab.active || tab.beforeActive}>
              <IconSlot>{tab.icon}</IconSlot>
              <TabTitle>{tab.title}</TabTitle>
              <CloseButton aria-label="Cerrar pestaña">
                <MdClose size={18} />
              </CloseButton>
            </Tab>
          ))}
          <NewTab aria-label="Nueva pestaña">
            <MdAdd size={22} />
          </NewTab>
        </TabList>
        <WindowButtons>
          <WindowButton aria-label="Buscar pestañas">
            <svg width="14" height="14" viewBox="0 0 14 14">
              <path d="M1 4l6 6 6-6" fill="none" stroke="#333" />
            </svg>
          </WindowButton>
          <WindowButton aria-label="Minimizar">
            <svg width="14" height="14" viewBox="0 0 14 14">
              <path d="M0 7h13" stroke="#000" />
            </svg>
          </WindowButton>
          <WindowButton aria-label="Maximizar">
            <svg width="14" height="14" viewBox="0 0 14 14">
              <rect x="1" y="1" width="12" height="12" fill="none" stroke="#000" />
            </svg>
          </WindowButton>
          <WindowButton aria-label="Cerrar">
            <svg width="14" height="14" viewBox="0 0 14 14">
              <path d="M1 1l12 12M13 1L1 13" stroke="#000" />
            </svg>
          </WindowButton>
        </WindowButtons>
      </TabStrip>

      <AddressBar>
        <NavButton aria-label="Atrás" $dim>
          <MdArrowBack size={24} />
        </NavButton>
        <NavButton aria-label="Adelante" $dim>
          <MdArrowForward size={24} />
        </NavButton>
        <NavButton aria-label="Recargar">
          <MdRefresh size={24} />
        </NavButton>
        <Omnibox>
          <MdInfoOutline size={20} color="#5f6368" />
          <Scheme htmlFor="url">Archivo</Scheme>
          <UrlInput
            id="url"
            defaultValue="C:/Users/Rivaldo%20Estrada/Downloads/PLANTA%20FINAL-Model.pdf"
          />
          <OmniButton aria-label="Zoom">
            <MagnifierMinusIcon />
          </OmniButton>
          <OmniButton aria-label="Compartir">
            <ShareIcon />
          </OmniButton>
          <OmniButton aria-label="Favorito">
            <MdStarBorder size={22} />
          </OmniButton>
        </Omnibox>
        <NavButton aria-label="Panel lateral">
          <SidePanelIcon />
        </NavButton>
        <NavButton aria-label="Perfil">
          <AvatarIcon size={28} />
        </NavButton>
        <NavButton aria-label="Menú">
          <MdMoreVert size={24} />
        </NavButton>
      </AddressBar>

      <BookmarkBar>
        {bookmarks.map((b) => (
          <Bookmark key={b.title} href="#">
            {b.mark ? <MarkIcon $mark={b.mark}>{b.mark}</MarkIcon> : <IconSlot>{b.icon}</IconSlot>}
            {b.title}
          </Bookmark>
        ))}
        <MoreBookmarks aria-label="Más marcadores">»</MoreBookmarks>
      </BookmarkBar>

      <PdfToolbar>
        <PdfTitle>
          <PdfButton aria-label="Menú">
            <MdMenu size={26} />
          </PdfButton>
          <h1>Model</h1>
        </PdfTitle>
        <PdfControls>
          <PdfInput aria-label="Página" defaultValue="1" $width={30} />
          <PageCount>/</PageCount>
          <PageCount>1</PageCount>
          <PdfDivider />
          <PdfButton aria-label="Alejar">
            <MdRemove size={24} />
          </PdfButton>
          <PdfInput aria-label="Zoom" defaultValue="33%" $width={57} />
          <PdfButton aria-label="Acercar">
            <MdAdd size={24} />
          </PdfButton>
          <PdfDivider />
          <PageTools>
            <PdfButton aria-label="Ajustar a la página">
              <FitIcon />
            </PdfButton>
            <PdfButton aria-label="Girar">
              <MdRotate90DegreesCcw size={24} />
            </PdfButton>
          </PageTools>
        </PdfControls>
        <PdfActions>
          <PdfButton aria-label="Descargar">
            <MdFileDownload size={26} />
          </PdfButton>
          <PdfButton aria-label="Imprimir">
            <MdPrint size={26} />
          </PdfButton>
          <PdfButton aria-label="Más acciones">
            <MdMoreVert size={26} />
          </PdfButton>
        </PdfActions>
      </PdfToolbar>

      <Viewer>
        <Sidebar>
          <SideTabs>
            <SideTab aria-label="Miniaturas" $selected>
              <ThumbsIcon />
            </SideTab>
            <SideTab aria-label="Esquema">
              <OutlineIcon />
            </SideTab>
          </SideTabs>
          <Thumbnails>
            <Thumbnail aria-label="Página 1">
              <SitePlan small />
            </Thumbnail>
            <span>1</span>
          </Thumbnails>
        </Sidebar>
        <Canvas>
          <Page>
            <SitePlan />
          </Page>
        </Canvas>
      </Viewer>

      <Shelf>
        <Download>
          <VideoFileIcon />
          <FileText $tight>
            Recorrido - Hotel....mp4
            <small>51,6/805 MB, Quedan 31 min</small>
          </FileText>
          <ShelfButton aria-label="Opciones">
            <ChevronUp color="#5f6368" />
          </ShelfButton>
        </Download>
        <Download>
          <PdfFileIcon />
          <FileText>PLANTA FINAL-Mo....pdf</FileText>
          <ShelfButton aria-label="Opciones">
            <ChevronUp color="#5f6368" />
          </ShelfButton>
        </Download>
        <Download>
          <PsdFileIcon />
          <FileText>area de mantenimi....psd</FileText>
          <ShelfButton aria-label="Opciones">
            <ChevronUp color="#5f6368" />
          </ShelfButton>
        </Download>
        <ShowAll>Mostrar todo</ShowAll>
        <ShelfButton aria-label="Cerrar descargas">
          <MdClose size={18} />
        </ShelfButton>
      </Shelf>

      <Taskbar>
        <StartButton aria-label="Inicio">
          <WindowsIcon />
        </StartButton>
        <SearchBox>
          <svg width="22" height="22" viewBox="0 0 22 22" fill="none" stroke="#111" strokeWidth="1.600">
            <circle cx="13" cy="8" r="6.500" />
            <path d="M8 13l-7 7" />
          </svg>
          <input aria-label="Buscar" placeholder="Escribe aquí para buscar." />
          <SearchArt />
        </SearchBox>
        <TaskButton aria-label="Vista de tareas">
          <TaskViewIcon />
        </TaskButton>
        <TaskButton aria-label="Edge">
          <EdgeIcon />
        </TaskButton>
        <TaskButton aria-label="Explorador" $line="#0f78d4">
          <ExplorerIcon />
        </TaskButton>
        <TaskButton aria-label="Correo">
          <MailIcon />
        </TaskButton>
        <TaskButton aria-label="Chrome" $line="#4fe03a" $back="linear-gradient(90deg, #93d69b 5px, #becdd8 5px)">
          <ChromeIcon />
        </TaskButton>
        <TaskButton aria-label="AutoCAD" $line="#0f86e0" $back="#ecf4f8">
          <AutoCadIcon />
        </TaskButton>
        <TaskButton aria-label="Photoshop" $line="#0f78d4">
          <AppBadge back="#261c66" edge="#7fb4ec" ink="#8cc6ff" label="Ps" />
        </TaskButton>
        <TaskButton aria-label="Illustrator" $line="#0f78d4">
          <AppBadge back="#4a2d10" edge="#d3943a" ink="#f7a531" label="Ai" />
        </TaskButton>
        <Tray>
          <Weather>
            <MoonIcon />
            <span>18°C</span>
            <span>Despejado</span>
          </Weather>
          <TrayIcons>
            <svg width="18" height="12" viewBox="0 0 18 12">
              <path d="M1 10l8-8 8 8" fill="none" stroke="#111" strokeWidth="1.500" />
            </svg>
            <MeetIcon />
            <BatteryIcon />
            <WifiIcon />
            <SpeakerIcon />
          </TrayIcons>
          <Language>ESP</Language>
          <Clock>
            <span>00:49</span>
            <span>22/04/2023</span>
          </Clock>
          <Notifications aria-label="Notificaciones">
            <svg width="22" height="22" viewBox="0 0 22 22">
              <path d="M0 1h20v16h-6v4l-5-4H0z" />
              <path d="M4 6h12M4 9h12M4 13h8" stroke="#dfe6f0" strokeWidth="1.300" />
            </svg>
            <span>3</span>
          </Notifications>
        </Tray>
      </Taskbar>
    </Desktop>
  );
}

/* ---------- styles ---------- */

const GlobalStyle = createGlobalStyle`
  * {
    box-sizing: border-box;
  }
  body {
    margin: 0;
    font-family: "Open Sans", "Noto Sans", sans-serif;
    font-size: 14px;
    color: #3c4043;
  }
  button {
    display: flex;
    align-items: center;
    justify-content: center;
    padding: 0;
    border: none;
    background: none;
    font: inherit;
    color: inherit;
  }
  input {
    padding: 0;
    border: none;
    outline: none;
    background: none;
    font: inherit;
    color: inherit;
  }
  svg {
    flex: none;
    display: block;
  }
`;

const Desktop = styled.div`
  display: flex;
  flex-direction: column;
  height: 100vh;
  overflow: hidden;
  background: #fff;
`;

const TabStrip = styled.header`
  display: flex;
  justify-content: space-between;
  flex: none;
  height: 55px;
  padding: 0 0 0 11px;
  border-top: 2px solid #4b4b4b;
  background: #dee1e6;
`;

const TabList = styled.div`
  display: flex;
  align-items: flex-end;
  flex: 1;
  min-width: 0;
`;

const Tab = styled.div`
  position: relative;
  display: flex;
  align-items: center;
  flex: 0 1 197px;
  min-width: 0;
  height: 43px;
  padding: 0 11px 0 14px;

  ${(p) =>
    !p.$plain &&
    css`
      &::after {
        content: "";
        position: absolute;
        right: 0;
        top: 9px;
        height: 25px;
        border-right: 1px solid #80868b;
      }
    `}
  ${(p) =>
    p.$active &&
    css`
      border-radius: 10px 10px 0 0;
      background: #fff;
      &::before,
      &::after {
        content: "";
        position: absolute;
        bottom: 0;
        width: 10px;
        height: 10px;
      }
      &::before {
        left: -10px;
        background: radial-gradient(circle at 0 0, transparent 10px, #fff 10px);
      }
      &::after {
        right: -10px;
        background: radial-gradient(circle at 100% 0, transparent 10px, #fff 10px);
      }
    `}
`;

const IconSlot = styled.span`
  display: flex;
  align-items: center;
  justify-content: center;
  flex: none;
  width: 20px;
  height: 20px;
`;

const TabTitle = styled.span`
  flex: 1;
  margin-left: 10px;
  white-space: nowrap;
  mask-image: linear-gradient(90deg, #000 85%, transparent);
`;

const CloseButton = styled.button`
  width: 18px;
  height: 18px;
`;

const NewTab = styled.button`
  width: 52px;
  height: 43px;
`;

const WindowButtons = styled.div`
  display: flex;
  height: 36px;
`;

const WindowButton = styled.button`
  width: 57px;
`;

const AddressBar = styled.div`
  display: flex;
  align-items: center;
  flex: none;
  height: 45px;
  padding: 0 6px 0 7px;
`;

const NavButton = styled.button`
  width: 40px;
  height: 36px;
  color: ${(p) => (p.$dim ? "#b9bbbe" : "#5f6368")};
`;

const Omnibox = styled.div`
  display: flex;
  align-items: center;
  flex: 1;
  height: 35px;
  margin: 0 7px;
  padding: 0 3px 0 12px;
  border-radius: 18px;
  background: #f1f3f4;
  font-size: 17px;
`;

const Scheme = styled.label`
  margin-left: 10px;
  padding-right: 7px;
  border-right: 2px solid #9a9da1;
  line-height: 20px;
  color: #5f6368;
`;

const UrlInput = styled.input`
  flex: 1;
  min-width: 0;
  margin-left: 11px;
  color: #202124;
`;

const OmniButton = styled.button`
  width: 40px;
  height: 35px;
  color: #5f6368;
`;

const BookmarkBar = styled.nav`
  display: flex;
  align-items: center;
  gap: 22px;
  flex: none;
  height: 41px;
  padding: 0 20px 6px 17px;
  border-bottom: 1px solid #d9dcdd;
`;

const Bookmark = styled.a`
  display: flex;
  align-items: center;
  gap: 11px;
  flex: none;
  color: inherit;
  text-decoration: none;
`;

const markStyles = {
  AP: css`
    background: #241f1c;
    color: #c8793b;
    font: 700 14px "Liberation Sans", sans-serif;
  `,
  A: css`
    color: #222;
    font: 700 24px "Liberation Serif", serif;
  `,
  PKP: css`
    color: #222;
    font: 700 10px "Liberation Serif", serif;
  `,
  PL: css`
    background: #14224a;
    color: #fff;
    font: 700 15px "Liberation Serif", serif;
  `,
};

const MarkIcon = styled.span`
  display: flex;
  align-items: center;
  justify-content: center;
  width: 20px;
  height: 20px;
  ${(p) => markStyles[p.$mark]}
`;

const MoreBookmarks = styled.button`
  margin-left: auto;
  font-size: 17px;
`;

const PdfToolbar = styled.div`
  position: relative;
  display: grid;
  grid-template-columns: 1fr auto 1fr;
  align-items: center;
  flex: none;
  height: 71px;
  padding: 0 20px 2px;
  background: #323639;
  box-shadow: 0 1px 3px rgba(0, 0, 0, 0.5);
  font-family: Roboto, sans-serif;
  font-size: 17px;
  color: #f1f1f1;
`;

const PdfTitle = styled.div`
  display: flex;
  align-items: center;
  gap: 22px;

  h1 {
    margin: 0;
    font-size: 17px;
    font-weight: 700;
  }
`;

const PdfControls = styled.div`
  display: flex;
  align-items: center;
`;

const PageTools = styled.div`
  display: flex;
  gap: 3px;
  margin-left: 9px;
`;

const PdfActions = styled.div`
  display: flex;
  justify-content: flex-end;
  gap: 8px;
`;

const PdfButton = styled.button`
  width: 42px;
  height: 36px;
`;

const PdfInput = styled.input`
  width: ${(p) => p.$width}px;
  height: 26px;
  margin-right: 6px;
  background: #191b1c;
  text-align: center;

  button + & {
    margin: 0 6px;
  }
`;

const PageCount = styled.span`
  margin-right: 10px;
`;

const PdfDivider = styled.span`
  height: 18px;
  margin: 0 7px;
  border-left: 1px solid #6b6e71;

  span + & {
    margin-left: 20px;
  }
`;

const Viewer = styled.main`
  display: flex;
  flex: 1;
  min-height: 0;
  background: #525659;
`;

const Sidebar = styled.aside`
  display: flex;
  width: 374px;
  background: #323639;
`;

const SideTabs = styled.div`
  display: flex;
  flex-direction: column;
  gap: 30px;
  width: 83px;
  padding-top: 14px;
`;

const SideTab = styled.button`
  height: 45px;
  border-left: 4px solid ${(p) => (p.$selected ? "#8ab4f8" : "transparent")};
  border-right: 4px solid transparent;
  border-radius: 0 4px 4px 0;
`;

const Thumbnails = styled.div`
  display: flex;
  flex-direction: column;
  align-items: center;
  gap: 4px;
  width: 252px;
  padding-top: 21px;
  font-family: Roboto, sans-serif;
  font-size: 17px;
  color: #f1f1f1;
`;

const Thumbnail = styled.button`
  width: 151px;
  border: 8px solid #8ab4f8;
  background: #fff;
`;

const Canvas = styled.section`
  display: flex;
  justify-content: center;
  align-items: flex-start;
  flex: 1;
  padding: 1px 0 0 2px;
`;

const Page = styled.article`
  width: 466px;
  background: #fff;
  box-shadow: 0 1px 3px 1px rgba(0, 0, 0, 0.5);
`;

const PlanDrawing = styled.svg`
  width: 100%;
  height: auto;
`;

const PlanLabel = styled.text`
  font-family: "Liberation Sans", sans-serif;
  font-size: 17px;
  fill: #111;
`;

const PlanLetter = styled.text`
  font-family: "Liberation Sans", sans-serif;
  font-size: 38px;
  fill: #15151c;
`;

const Shelf = styled.section`
  display: flex;
  align-items: center;
  flex: none;
  height: 60px;
  padding: 9px 9px 0 0;
  border-top: 1px solid #c9cbcd;
  background: #fff;
`;

const Download = styled.div`
  display: flex;
  align-items: center;
  width: 293px;
  height: 50px;
  padding: 0 15px 0 20px;
  border-right: 1px solid #c4c6c8;

  &:first-child {
    padding-left: 17px;
  }
`;

const FileText = styled.span`
  display: flex;
  flex-direction: column;
  flex: 1;
  margin-left: ${(p) => (p.$tight ? 10 : 17)}px;
  font-size: 16px;
  line-height: 24px;
  white-space: nowrap;

  small {
    font-size: 12px;
  }
`;

const ShelfButton = styled.button`
  width: 24px;
  height: 24px;
`;

const ShowAll = styled.button`
  width: 132px;
  height: 40px;
  margin: 0 10px 0 auto;
  border: 1px solid #dadce0;
  border-radius: 5px;
  color: #2a62d8;
`;

const Taskbar = styled.footer`
  display: flex;
  flex: none;
  height: 50px;
  background: linear-gradient(90deg, #d1e6ee, #d4e3ec 60%, #d7dbea);
  color: #16181b;
`;

const StartButton = styled.button`
  width: 61px;
`;

const SearchBox = styled.div`
  display: flex;
  align-items: center;
  width: 429px;
  padding-left: 14px;
  border: 1px solid #b5bcc0;
  background: #fff;
  font-size: 18px;

  input {
    flex: 1;
    min-width: 0;
    margin-left: 12px;
  }
  input::placeholder {
    color: #2b2b2b;
    opacity: 1;
  }
`;

const TaskButton = styled.button`
  width: 52px;
  margin-right: 10px;
  border-top: 3px solid transparent;
  border-bottom: 3px solid ${(p) => p.$line || "transparent"};
  background: ${(p) => p.$back || "none"};
  background-origin: border-box;

  ${SearchBox} + & {
    margin: 0 12px 0 4px;
  }
`;

const Tray = styled.div`
  display: flex;
  align-items: center;
  margin-left: auto;
  border-right: 1px solid #9ba3b4;
  margin-right: 4px;
`;

const Weather = styled.div`
  display: flex;
  align-items: center;
  gap: 11px;
  margin-right: 29px;
  font-size: 17px;
`;

const TrayIcons = styled.div`
  display: flex;
  align-items: center;
  gap: 11px;
`;

const Language = styled.span`
  margin: 0 19px 0 15px;
`;

const Clock = styled.div`
  display: flex;
  flex-direction: column;
  align-items: center;
  line-height: 23px;
`;

const Notifications = styled.button`
  position: relative;
  margin: 0 24px;

  span {
    position: absolute;
    left: 9px;
    top: 9px;
    width: 21px;
    height: 21px;
    border: 1px solid #777;
    border-radius: 50%;
    background: #d9dce2;
    line-height: 19px;
  }
`;
